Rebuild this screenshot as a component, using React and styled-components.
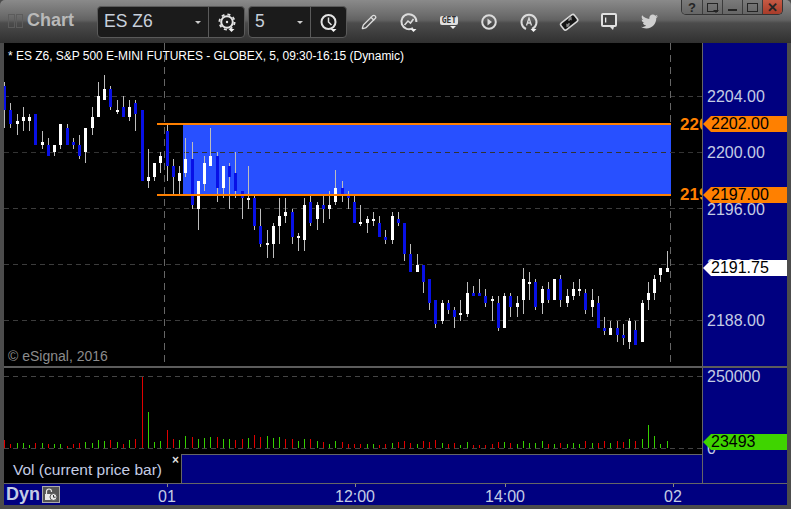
import styled, { createGlobalStyle } from "styled-components";
import { Pencil } from "lucide-react";
import { FaTwitter } from "react-icons/fa";

const GlobalStyle = createGlobalStyle`
  html, body {
    margin: 0;
    padding: 0;
    background: #000;
  }
`;

const AXIS_BLUE = "#000080";
const AXIS_TEXT = "#c4cce4";
const FRAME = "#4c4c4c";
const LINE = "#666";

// all y values are screen pixels, the svg viewBoxes below keep that origin
// [high, body top, body bottom, low, colour]
const candles = [
  [82, 86, 110, 128, "b"], [103, 110, 124, 128, "b"], [114, 121, 124, 135, "w"], [107, 117, 121, 131, "w"],
  [114, 117, 121, 131, "w"], [114, 114, 145, 145, "b"], [131, 142, 145, 149, "w"], [138, 145, 156, 156, "b"],
  [145, 145, 152, 156, "w"], [124, 124, 145, 149, "w"], [124, 128, 145, 145, "b"], [138, 142, 145, 149, "b"],
  [135, 145, 156, 159, "b"], [128, 128, 152, 163, "w"], [107, 117, 128, 135, "w"], [82, 96, 117, 117, "w"],
  [75, 89, 100, 100, "w"], [86, 89, 107, 110, "b"], [100, 110, 112, 114, "w"], [96, 107, 117, 117, "b"],
  [100, 107, 117, 121, "w"], [100, 103, 114, 131, "b"], [110, 110, 181, 181, "b"], [149, 177, 181, 188, "w"],
  [163, 163, 177, 181, "w"], [152, 156, 163, 173, "w"], [124, 131, 166, 181, "b"], [159, 166, 177, 195, "b"],
  [166, 173, 181, 195, "w"], [138, 159, 173, 177, "w"], [142, 159, 205, 209, "b"], [181, 181, 209, 230, "w"],
  [156, 163, 184, 191, "w"], [128, 156, 166, 166, "w"], [152, 156, 188, 202, "b"], [166, 166, 188, 198, "w"],
  [163, 166, 177, 209, "b"], [152, 173, 191, 198, "b"], [191, 191, 198, 219, "b"], [166, 198, 200, 209, "w"],
  [195, 198, 226, 230, "b"], [209, 226, 244, 247, "b"], [230, 243, 245, 258, "w"], [223, 226, 244, 258, "w"],
  [198, 216, 226, 244, "w"], [198, 212, 216, 223, "w"], [209, 212, 237, 244, "b"], [233, 236, 238, 251, "w"],
  [198, 205, 240, 251, "w"], [195, 202, 223, 226, "b"], [202, 205, 219, 230, "w"], [195, 205, 209, 223, "b"],
  [191, 205, 209, 219, "w"], [170, 188, 202, 205, "w"], [181, 188, 195, 202, "b"], [191, 195, 198, 209, "b"],
  [195, 202, 223, 223, "b"], [205, 222, 224, 226, "w"], [216, 219, 223, 233, "w"], [212, 219, 221, 226, "w"],
  [216, 223, 237, 237, "b"], [230, 237, 240, 244, "b"], [212, 216, 240, 244, "w"], [212, 219, 223, 226, "b"],
  [223, 223, 254, 261, "b"], [244, 254, 272, 272, "b"], [254, 265, 272, 272, "w"], [265, 265, 282, 293, "b"],
  [279, 279, 303, 310, "b"], [300, 300, 324, 328, "b"], [300, 303, 321, 324, "w"], [300, 303, 310, 314, "b"],
  [307, 310, 317, 328, "b"], [300, 313, 315, 321, "w"], [282, 293, 314, 317, "w"], [286, 293, 296, 296, "b"],
  [279, 293, 296, 296, "b"], [289, 296, 303, 307, "b"], [296, 299, 301, 321, "w"], [296, 303, 328, 331, "b"],
  [293, 296, 328, 328, "w"], [293, 296, 307, 317, "b"], [296, 303, 307, 317, "w"], [268, 279, 300, 314, "w"],
  [272, 282, 284, 300, "w"], [279, 282, 307, 310, "b"], [286, 289, 303, 314, "w"], [282, 289, 300, 303, "b"],
  [279, 279, 300, 300, "w"], [275, 279, 300, 307, "b"], [289, 296, 303, 307, "w"], [282, 289, 296, 300, "w"],
  [279, 289, 291, 296, "w"], [289, 293, 310, 314, "b"], [289, 300, 307, 317, "w"], [296, 303, 328, 328, "b"],
  [317, 328, 331, 335, "b"], [321, 328, 335, 335, "w"], [321, 328, 335, 342, "b"], [324, 335, 338, 345, "b"],
  [318, 321, 342, 349, "w"], [321, 330, 345, 345, "b"], [300, 303, 342, 342, "w"], [282, 293, 300, 310, "w"],
  [275, 279, 293, 300, "w"], [268, 268, 275, 282, "w"], [251, 268, 272, 272, "w"],
];

// [height, r|g], one per candle
const volumes = [
  [8, "r"], [4, "r"], [5, "g"], [5, "g"], [3, "g"], [5, "r"], [5, "g"], [4, "r"], [4, "g"], [4, "g"],
  [2, "r"], [4, "r"], [5, "r"], [6, "g"], [5, "g"], [8, "g"], [7, "g"], [8, "r"], [6, "g"], [4, "r"],
  [8, "g"], [9, "r"], [71, "r"], [36, "g"], [6, "g"], [7, "g"], [18, "r"], [9, "r"], [8, "g"], [12, "g"],
  [11, "r"], [9, "g"], [10, "g"], [11, "g"], [11, "r"], [9, "g"], [9, "g"], [8, "r"], [9, "r"], [10, "g"],
  [13, "r"], [11, "r"], [12, "g"], [10, "g"], [11, "g"], [9, "r"], [9, "r"], [7, "g"], [9, "g"], [9, "r"],
  [7, "g"], [6, "r"], [4, "g"], [7, "g"], [6, "r"], [4, "r"], [4, "r"], [4, "r"], [4, "g"], [4, "g"],
  [3, "r"], [4, "r"], [5, "g"], [6, "r"], [7, "r"], [5, "r"], [4, "g"], [7, "r"], [6, "r"], [8, "r"],
  [5, "g"], [4, "r"], [5, "r"], [3, "g"], [6, "g"], [3, "r"], [3, "r"], [3, "r"], [4, "r"], [6, "r"],
  [6, "g"], [5, "r"], [4, "g"], [7, "g"], [5, "g"], [5, "g"], [7, "g"], [4, "r"], [4, "g"], [5, "r"],
  [4, "g"], [5, "g"], [4, "g"], [7, "r"], [5, "g"], [5, "r"], [7, "r"], [5, "g"], [7, "r"], [6, "r"],
  [9, "g"], [7, "r"], [9, "g"], [23, "g"], [12, "g"], [4, "g"], [7, "g"],
];

const barX = (i) => Math.floor(4.7 + i * 6.25);

const Window = styled.div`
  width: 791px;
  height: 509px;
  display: flex;
  flex-direction: column;
  overflow: hidden;
  background: ${FRAME};
  font-family: "Liberation Sans", Arial, sans-serif;
`;

const TitleBar = styled.div`
  height: 43px;
  flex: none;
  display: flex;
  align-items: center;
  background: linear-gradient(#8a8a8a 0, #6f6f6f 14px, #626262 20px, #4c4c4c 23px, #303030 43px);
  border-radius: 5px 5px 0 0;
`;

const Grip = styled.div`
  display: flex;
  gap: 1px;
  margin-left: 8px;
  margin-top: -1px;
`;

const GripCell = styled.span`
  width: 5px;
  height: 12px;
  border: 1px solid #5c5c5c;
`;

const Title = styled.div`
  width: 70px;
  margin-left: 4px;
  margin-top: -2px;
  color: #b9b9b9;
  font-size: 18px;
  font-weight: 700;
`;

const Combo = styled.div`
  height: 30px;
  display: flex;
  margin-right: 3px;
  border: 1px solid #5a5a5a;
  border-radius: 4px;
  background: #1b1b1b;
`;

const ComboField = styled.div`
  width: ${({ $width }) => $width}px;
  box-sizing: border-box;
  padding-left: 6px;
  display: flex;
  align-items: center;
  position: relative;
  color: #c8d0dc;
  font-size: 17.5px;
`;

const ComboCaret = styled.span`
  position: absolute;
  right: 7px;
  top: 14px;
  border: 3px solid transparent;
  border-top: 3px solid #ccc;
  border-bottom: 0;
`;

const ComboButton = styled.div`
  width: ${({ $width }) => $width}px;
  box-sizing: border-box;
  display: flex;
  align-items: center;
  justify-content: center;
  border-left: 1px solid #5a5a5a;
`;

const Tool = styled.div`
  width: 40px;
  height: 24px;
  display: flex;
  align-items: center;
  justify-content: center;
  color: #dcdcdc;
`;

const Tools = styled.div`
  display: flex;
  margin-left: -1px;
`;

const GetBadge = styled.span`
  height: 9px;
  margin-top: -3px;
  padding: 0 2px;
  border-radius: 2px;
  background: #e0e0e0;
  color: #333;
  font-size: 8px;
  line-height: 9px;
  font-weight: 700;
  font-family: "DejaVu Sans Mono", monospace;
  position: relative;

  &::after {
    content: "";
    position: absolute;
    left: 10px;
    bottom: -4px;
    border: 3px solid transparent;
    border-top: 3px solid #eee;
    border-bottom: 0;
  }
`;

const WindowButtons = styled.div`
  align-self: flex-start;
  margin-left: auto;
  margin-right: 8px;
  display: flex;
  height: 14px;
  border: 1px solid #333;
  border-top: 0;
  border-radius: 0 0 5px 5px;
  overflow: hidden;
`;

const WindowButton = styled.div`
  width: 20px;
  display: flex;
  align-items: center;
  justify-content: center;
  position: relative;
  box-sizing: border-box;
  border-left: ${({ $first }) => ($first ? "0" : "1px solid #3c3c3c")};
  background: ${({ $close }) =>
    $close ? "linear-gradient(#c65a44, #a83c2a)" : "linear-gradient(#7a7a7a, #666)"};
  color: #242424;
  font-size: 13px;
  font-weight: 700;
`;

const MinGlyph = styled.span`
  width: 9px;
  height: 2px;
  margin-top: 6px;
  background: #242424;
`;

const MaxGlyph = styled.span`
  width: 9px;
  height: 7px;
  border: 1px solid #242424;
`;

const MenuCaret = styled.span`
  position: absolute;
  right: 3px;
  bottom: 1px;
  border: 3px solid transparent;
  border-top: 3px solid #242424;
  border-bottom: 0;
`;

const Body = styled.div`
  flex: 1;
  display: flex;
  flex-direction: column;
  padding: 0 4px 4px;
`;

const PriceRow = styled.div`
  height: 323px;
  flex: none;
  display: grid;
  grid-template-columns: 699px 84px;
  border-bottom: 2px solid #5c5c5c;
`;

const LowerRow = styled.div`
  height: 115px;
  flex: none;
  display: grid;
  grid-template-columns: 699px 84px;
  border-bottom: 1px solid ${LINE};
`;

const Plot = styled.div`
  position: relative;
  overflow: hidden;
  background: #000;
  border-right: 1px solid ${LINE};
`;

const PlotColumn = styled.div`
  display: flex;
  flex-direction: column;
  background: #000;
  border-right: 1px solid ${LINE};
`;

const ChartSvg = styled.svg`
  display: block;
`;

const StudyHeading = styled.div`
  position: absolute;
  left: 4px;
  top: 6px;
  color: #fff;
  font-size: 12px;
  line-height: 14px;
  letter-spacing: -0.03px;
  white-space: nowrap;
`;

const Watermark = styled.div`
  position: absolute;
  left: 4px;
  bottom: 2px;
  color: #8c8c8c;
  font-size: 14px;
  line-height: 16px;
`;

const LineLabel = styled.div`
  position: absolute;
  left: 676px;
  top: ${({ $top }) => $top}px;
  color: #ff8000;
  font-size: 17px;
  line-height: 18px;
  font-weight: 700;
`;

const Axis = styled.div`
  position: relative;
  overflow: hidden;
  background: ${AXIS_BLUE};
`;

const AxisLabel = styled.div`
  position: absolute;
  left: 4px;
  top: ${({ $top }) => $top}px;
  color: ${AXIS_TEXT};
  font-size: 16px;
  line-height: 18px;
`;

const PriceTag = styled.div`
  position: absolute;
  left: 0;
  right: 0;
  top: ${({ $top }) => $top}px;
  height: 16px;
  box-sizing: border-box;
  padding-left: 8px;
  background: ${({ $bg }) => $bg};
  clip-path: polygon(0 50%, 8px 0, 100% 0, 100% 100%, 8px 100%);
  color: #000;
  font-size: 16px;
  line-height: 16px;
`;

const VolumePane = styled.div`
  height: 86px;
  flex: none;
  background: #000;
`;

const LegendRow = styled.div`
  flex: 1;
  display: flex;
`;

const Legend = styled.div`
  width: 178px;
  flex: none;
  box-sizing: border-box;
  position: relative;
  padding: 7px 0 0 9px;
  color: ${AXIS_TEXT};
  font-size: 15.5px;
  line-height: 18px;
  white-space: nowrap;
  border-right: 1px solid ${LINE};
`;

const LegendClose = styled.span`
  position: absolute;
  right: 2px;
  top: 0;
  color: #ddd;
  font-size: 12px;
  line-height: 12px;
  font-weight: 700;
`;

const LegendFill = styled.div`
  flex: 1;
  background: ${AXIS_BLUE};
  border-top: 1px solid ${LINE};
`;

const TimeAxis = styled.div`
  flex: 1;
  position: relative;
  display: flex;
  align-items: center;
  background: ${AXIS_BLUE};
`;

const Dyn = styled.div`
  margin-left: 2px;
  margin-top: -1px;
  color: ${AXIS_TEXT};
  font-size: 18px;
  font-weight: 700;
`;

const LockBox = styled.div`
  width: 16px;
  height: 15px;
  margin-left: 2px;
  margin-top: -1px;
  display: flex;
  align-items: center;
  justify-content: center;
  border: 1px solid #aaa;
  background: #555;
`;

const TimeLabel = styled.div`
  position: absolute;
  left: ${({ $x }) => $x}px;
  top: 4px;
  color: ${AXIS_TEXT};
  font-size: 16px;
  line-height: 18px;
  transform: translateX(-50%);
`;

const TimeTick = styled.div`
  position: absolute;
  left: ${({ $x }) => $x}px;
  top: 0;
  width: 1px;
  height: 3px;
  background: #888;
`;

const Caret = () => <path d="M13.5 19h6l-3 3z" fill="#f2f2f2" stroke="none" />;

const GearIcon = () => (
  <svg width="24" height="24" viewBox="0 0 24 24" fill="none" stroke="#e4e4e4">
    <circle cx="12" cy="12" r="5.8" strokeWidth="2" />
    <circle cx="12" cy="12" r="7.6" strokeWidth="1.8" strokeDasharray="3 3" />
    <circle cx="12" cy="12" r="1.2" fill="#e4e4e4" stroke="none" />
    <Caret />
  </svg>
);

const ClockIcon = () => (
  <svg width="24" height="24" viewBox="0 0 24 24" fill="none" stroke="#e4e4e4">
    <circle cx="11.5" cy="12" r="7" strokeWidth="2" />
    <path d="M11.5 7.5V12l3 3" strokeWidth="1.5" />
    <Caret />
  </svg>
);

const TrendIcon = () => (
  <svg width="24" height="24" viewBox="0 0 24 24" fill="none" stroke="#dcdcdc">
    <path d="M16 18a7.5 7.5 0 1 1 3.4-6" strokeWidth="2" />
    <path d="M7.5 15l3.5-4 2.5 2 3-4" strokeWidth="1.6" />
    <Caret />
  </svg>
);

const PlayIcon = () => (
  <svg width="24" height="24" viewBox="0 0 24 24" fill="none" stroke="#dcdcdc">
    <circle cx="12" cy="12" r="6.8" strokeWidth="2" />
    <path d="M10.5 8.5l4.5 3.5-4.5 3.5z" fill="#dcdcdc" stroke="none" />
  </svg>
);

const AlertIcon = () => (
  <svg width="24" height="24" viewBox="0 0 24 24" fill="none" stroke="#dcdcdc">
    <path d="M15 19a7.5 7.5 0 1 0-6 0" strokeWidth="2" />
    <path d="M9.5 15.5L12 8l2.5 7.5M10.3 13h3.4" strokeWidth="1.3" />
    <Caret />
  </svg>
);

const SwapIcon = () => (
  <svg width="24" height="24" viewBox="0 0 24 24">
    <rect
      x="3.5"
      y="8"
      width="17"
      height="8.5"
      rx="2"
      transform="rotate(-38 12 12)"
      fill="#151515"
      stroke="#d8d8d8"
      strokeWidth="1.6"
    />
    <path d="M11 8l3.5-1.2.3 3.6-1.2-.7-1.6 1.6-1.2-1.2 1.5-1.4zM13 16l-3.5 1.2-.3-3.6 1.2.7 1.6-1.6 1.2 1.2-1.5 1.4z" fill="#8a8a8a" />
  </svg>
);

const NoteIcon = () => (
  <svg width="24" height="24" viewBox="0 0 24 24">
    <path d="M4 5a2 2 0 0 1 2-2h12a2 2 0 0 1 2 2v10a2 2 0 0 1-2 2h-1l-1 3-3-3H6a2 2 0 0 1-2-2z" fill="#e0e0e0" />
    <path d="M6 5h12v10H6z" fill="#444" />
    <path d="M8 7.5h1.3v5H8z" fill="#e8e8e8" />
  </svg>
);

const LockIcon = () => (
  <svg width="14" height="13" viewBox="0 0 14 13" fill="none" stroke="#e8e8e8">
    <path d="M2.5 6V3.5a2.5 2.5 0 0 1 5 0V4" strokeWidth="1.2" />
    <path d="M1 6h6v6H1z" fill="#e8e8e8" stroke="none" />
    <circle cx="9.5" cy="9" r="3.5" fill="#e8e8e8" stroke="#555" strokeWidth="1" />
    <path d="M9.5 7v2.2h2" stroke="#333" strokeWidth="1" />
  </svg>
);

const PriceChart = () => (
  <ChartSvg width="698" height="323" viewBox="4 43 698 323" shapeRendering="crispEdges">
    {[96, 208, 264, 320].map((y) => (
      <line key={y} x1="4" x2="702" y1={y + 0.5} y2={y + 0.5} stroke="#3c3c3c" strokeDasharray="5 4" />
    ))}
    {[164, 670].map((x) => (
      <line key={x} x1={x + 0.5} x2={x + 0.5} y1="43" y2="366" stroke="#666" strokeDasharray="7 5" />
    ))}
    <rect x="183" y="124" width="488" height="71" fill="#2850ff" />
    <line x1="4" x2="702" y1="152.5" y2="152.5" stroke="#333" strokeDasharray="5 4" />
    {candles.map(([hi, top, bot, lo, kind], i) => (
      <g key={i}>
        <rect x={barX(i)} y={hi} width="1" height={lo - hi} fill="#bdbdbd" />
        <rect
          x={barX(i) - 1}
          y={top}
          width="3"
          height={bot - top}
          fill={kind === "w" ? "#fff" : "#0810e6"}
        />
      </g>
    ))}
    <rect x="157" y="123" width="514" height="2" fill="#ff8000" />
    <rect x="157" y="194" width="514" height="2" fill="#ff8000" />
  </ChartSvg>
);

const VolumeChart = () => (
  <ChartSvg width="698" height="86" viewBox="4 368 698 86" shapeRendering="crispEdges">
    <line x1="4" x2="702" y1="376.5" y2="376.5" stroke="#444" strokeDasharray="5 4" />
    <line x1="4" x2="702" y1="448.5" y2="448.5" stroke="#444" strokeDasharray="5 4" />
    {volumes.map(([h, kind], i) => (
      <rect key={i} x={barX(i)} y={448 - h} width="1" height={h} fill={kind === "r" ? "#e00000" : "#36d000"} />
    ))}
  </ChartSvg>
);

const priceLabels = [
  ["2204.00", 45],
  ["2200.00", 101],
  ["2196.00", 158],
  ["2192.00", 214],
  ["2188.00", 269],
];

const timeLabels = [
  ["01", 163],
  ["12:00", 351],
  ["14:00", 501],
  ["02", 669],
];

const App = () => (
  <Window>
    <GlobalStyle />
    <TitleBar>
      <Grip>
        <GripCell />
        <GripCell />
      </Grip>
      <Title>Chart</Title>
      <Combo>
        <ComboField $width={110}>
          ES Z6
          <ComboCaret />
        </ComboField>
        <ComboButton $width={36}>
          <GearIcon />
        </ComboButton>
      </Combo>
      <Combo>
        <ComboField $width={61}>
          5
          <ComboCaret />
        </ComboField>
        <ComboButton $width={36}>
          <ClockIcon />
        </ComboButton>
      </Combo>
      <Tools>
        <Tool>
          <Pencil size={16} strokeWidth={2} />
        </Tool>
        <Tool>
          <TrendIcon />
        </Tool>
        <Tool>
          <GetBadge>GET</GetBadge>
        </Tool>
        <Tool>
          <PlayIcon />
        </Tool>
        <Tool>
          <AlertIcon />
        </Tool>
        <Tool>
          <SwapIcon />
        </Tool>
        <Tool>
          <NoteIcon />
        </Tool>
        <Tool>
          <FaTwitter size={17} color="#cfcfcf" />
        </Tool>
      </Tools>
      <WindowButtons>
        <WindowButton $first>?</WindowButton>
        <WindowButton>
          <MaxGlyph />
          <MenuCaret />
        </WindowButton>
        <WindowButton>
          <MinGlyph />
        </WindowButton>
        <WindowButton>
          <MaxGlyph />
        </WindowButton>
        <WindowButton $close>✕</WindowButton>
      </WindowButtons>
    </TitleBar>
    <Body>
      <PriceRow>
        <Plot>
          <PriceChart />
          <StudyHeading>* ES Z6, S&amp;P 500 E-MINI FUTURES - GLOBEX, 5, 09:30-16:15 (Dynamic)</StudyHeading>
          <Watermark>© eSignal, 2016</Watermark>
          <LineLabel $top={73}>2202.00</LineLabel>
          <LineLabel $top={143}>2197.00</LineLabel>
        </Plot>
        <Axis>
          {priceLabels.map(([text, top]) => (
            <AxisLabel key={text} $top={top}>
              {text}
            </AxisLabel>
          ))}
          <PriceTag $top={73} $bg="#ff8000">
            2202.00
          </PriceTag>
          <PriceTag $top={144} $bg="#ff8000">
            2197.00
          </PriceTag>
          <PriceTag $top={217} $bg="#fff">
            2191.75
          </PriceTag>
        </Axis>
      </PriceRow>
      <LowerRow>
        <PlotColumn>
          <VolumePane>
            <VolumeChart />
          </VolumePane>
          <LegendRow>
            <Legend>
              Vol (current price bar)
              <LegendClose>×</LegendClose>
            </Legend>
            <LegendFill />
          </LegendRow>
        </PlotColumn>
        <Axis>
          <AxisLabel $top={0}>250000</AxisLabel>
          <AxisLabel $top={72}>0</AxisLabel>
          <PriceTag $top={66} $bg="#3fd400">
            23493
          </PriceTag>
        </Axis>
      </LowerRow>
      <TimeAxis>
        <Dyn>Dyn</Dyn>
        <LockBox>
          <LockIcon />
        </LockBox>
        {timeLabels.map(([text, x]) => (
          <div key={text}>
            <TimeTick $x={x} />
            <TimeLabel $x={x}>{text}</TimeLabel>
          </div>
        ))}
      </TimeAxis>
    </Body>
  </Window>
);

export default App;
